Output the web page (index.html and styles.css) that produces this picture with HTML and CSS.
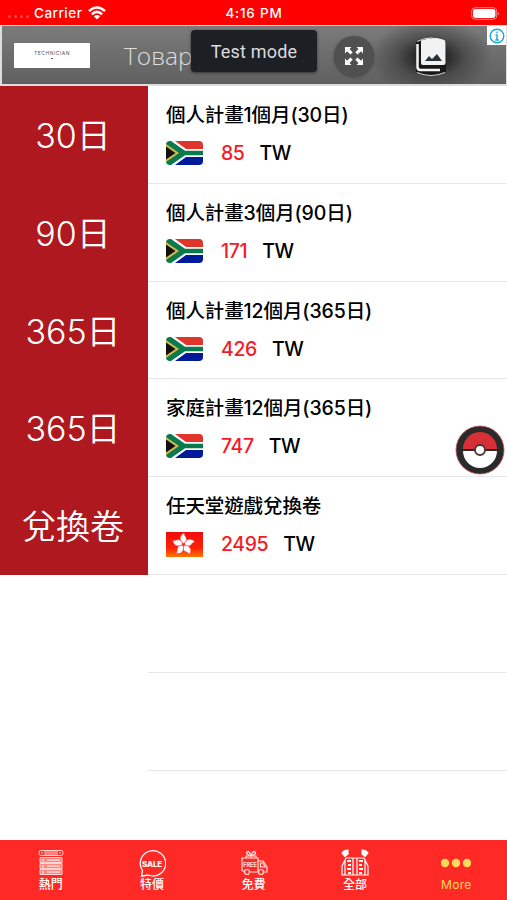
FILE: index.html
```html
<!DOCTYPE html>
<html lang="zh-TW">
<head>
    <meta charset="UTF-8">
    <meta name="viewport" content="width=device-width, initial-scale=1.0">
    <title>會員計畫</title>
    <link rel="stylesheet" href="styles.css">
</head>
<body>
    <svg class="defs" width="0" height="0">
        <symbol id="flag-za" viewBox="0 0 37 24">
            <path fill="#fff" d="M0 0h37v24H0z"/>
            <path fill="#df352c" d="M9 0h28v8H20z"/>
            <path fill="#001b9a" d="M9 24h28v-8H20z"/>
            <path fill="#087a4d" d="M0 0h5l14 9.7h18v4.6H19L5 24H0z"/>
            <path fill="#d8b84a" d="M0 3l13 9L0 21z"/>
            <path fill="#111" d="M0 5.500L9.500 12 0 18.500z"/>
        </symbol>
    </svg>

    <div class="app">
        <header class="status">
            <div class="carrier">
                <span class="signal"><i></i><i></i><i></i><i></i></span>
                <span>Carrier</span>
                <svg class="wifi" viewBox="0 0 18 14" fill="none" stroke="#fff" stroke-width="2.5">
                    <path d="M1 5.2Q9-2.1 17 5.2M3.8 8.3Q9 3.5 14.2 8.3"/>
                    <path fill="#fff" stroke="none" d="M5.8 10.2Q9 7.6 12.2 10.2L9 13.6z"/>
                </svg>
            </div>
            <div class="time">4:16 PM</div>
            <svg class="battery" viewBox="0 0 29 13">
                <rect x=".7" y=".7" width="25" height="11.6" rx="3.5" fill="none" stroke="#ff8f8f"/>
                <rect x="2" y="2" width="22.4" height="9" rx="2.4" fill="#fff"/>
                <path fill="#ff8f8f" d="M27 4.5q1.8 2 0 4z"/>
            </svg>
        </header>

        <div class="banner">
            <div class="technician">TECHNICIAN<b></b></div>
            <div class="banner-title">Товар</div>
            <div class="test-mode">Test mode</div>
            <div class="expand">
                <svg viewBox="0 0 18 18" fill="#fff">
                    <path d="M0 0h6.5L4.5 2l3.2 3.2-2.3 2.3L2 4.3 0 6.5z"/>
                    <path d="M18 0v6.5L16 4.3l-3.4 3.2-2.3-2.3L13.5 2l-2-2z"/>
                    <path d="M0 18v-6.5l2 2.2 3.4-3.2 2.3 2.3L4.5 16l2 2z"/>
                    <path d="M18 18h-6.5l2-2-3.2-3.2 2.3-2.3 3.4 3.2 2-2.2z"/>
                </svg>
            </div>
            <div class="gallery">
                <svg viewBox="0 0 32 40">
                    <path fill="#181818" d="M1 5Q16-3 31 5v30Q16 43 1 35z"/>
                    <path fill="none" stroke="#ddd" d="M2 4.500Q16-2.500 30 4.500M2 35.500q14 6 28 0"/>
                    <path fill="none" stroke="#f5f5f5" stroke-width="2.500" d="M2.500 7v23q0 3 3 3H25"/>
                    <path fill="#f2f2f2" d="M6 3.500Q18-.5 28 2.500q2.500.5 2.500 3V26q0 2-2 2H8q-2 0-2-2z"/>
                    <path fill="#26333d" d="M10 24l4-5 3 3 5-5 5 7z"/>
                </svg>
            </div>
            <div class="ad-info">
                <svg viewBox="0 0 16 16" fill="none" stroke="#1ba6d6" stroke-width="1.4">
                    <circle cx="8" cy="8" r="6.8"/>
                    <path d="M8 3.5v1.8M6.5 7H8v4.700M6.200 12h3.600"/>
                </svg>
            </div>
        </div>

        <main class="plans">
            <div class="plan">
                <div class="days">30日</div>
                <div class="info">
                    <div class="name">個人計畫1個月(30日)</div>
                    <div class="price"><svg class="flag round"><use href="#flag-za"/></svg><span class="amount">85</span><span>TW</span></div>
                </div>
            </div>
            <div class="plan">
                <div class="days">90日</div>
                <div class="info">
                    <div class="name">個人計畫3個月(90日)</div>
                    <div class="price"><svg class="flag round"><use href="#flag-za"/></svg><span class="amount">171</span><span>TW</span></div>
                </div>
            </div>
            <div class="plan">
                <div class="days">365日</div>
                <div class="info">
                    <div class="name">個人計畫12個月(365日)</div>
                    <div class="price"><svg class="flag round"><use href="#flag-za"/></svg><span class="amount">426</span><span>TW</span></div>
                </div>
            </div>
            <div class="plan">
                <div class="days">365日</div>
                <div class="info">
                    <div class="name">家庭計畫12個月(365日)</div>
                    <div class="price"><svg class="flag round"><use href="#flag-za"/></svg><span class="amount">747</span><span>TW</span></div>
                </div>
            </div>
            <div class="plan">
                <div class="days">兌換卷</div>
                <div class="info">
                    <div class="name">任天堂遊戲兌換卷</div>
                    <div class="price">
                        <svg class="flag" viewBox="0 0 37 25">
                            <defs>
                                <linearGradient id="hk" x2="0" y2="1">
                                    <stop offset="0" stop-color="#f00c0c"/>
                                    <stop offset=".65" stop-color="#fc2108"/>
                                    <stop offset="1" stop-color="#ff7900"/>
                                </linearGradient>
                                <path id="petal" d="M0-1C-5-4-4-10 1-11.500 0-9 4-7 3-4 2.500-2 1-2 0-1z"/>
                            </defs>
                            <path fill="url(#hk)" d="M0 0h37v25H0z"/>
                            <g fill="#fff" stroke="#f33" stroke-width=".5" transform="translate(17.500 12.500)">
                                <use href="#petal"/>
                                <use href="#petal" transform="rotate(72)"/>
                                <use href="#petal" transform="rotate(144)"/>
                                <use href="#petal" transform="rotate(216)"/>
                                <use href="#petal" transform="rotate(288)"/>
                            </g>
                        </svg>
                        <span class="amount">2495</span><span>TW</span>
                    </div>
                </div>
            </div>
            <div class="plan empty"><div class="info"></div></div>
            <div class="plan empty"><div class="info"></div></div>
        </main>

        <svg class="pokeball" viewBox="0 0 50 50">
            <circle cx="25" cy="25" r="24" fill="#292b2b" stroke="#c8505c" stroke-width=".8"/>
            <path fill="#d72f35" d="M8 24a17 17 0 0 1 34 0z"/>
            <path fill="#fff" d="M8 26a17 17 0 0 0 34 0z"/>
            <circle cx="25" cy="25" r="5" fill="#fff" stroke="#4a3b32" stroke-width="2"/>
        </svg>

        <nav class="tabs">
            <a class="tab">
                <svg viewBox="0 0 28 28" fill="none" stroke="#ffd5d1">
                    <rect x="2" y="1.5" width="24" height="5" rx="2"/>
                    <path d="M4 4h2M22 4h2M7 3h14M7 5h14"/>
                    <path fill="#ff8580" d="M3 8.500h22v5H3zM3 14.500h22v5H3zM3 20.500h22v5H3z"/>
                    <path stroke-width="1.5" d="M6 10v2.500M6 16v2.500M6 22v2.500M10 11h13M10 17h13M10 23h13"/>
                </svg>
                <span>熱門</span>
            </a>
            <a class="tab">
                <svg viewBox="0 0 28 28" fill="none" stroke="#fff" stroke-width="1.3">
                    <path d="M4.500 21.500A12.700 12.700 0 1 1 10 26L3.500 27.200z"/>
                    <text class="sale-text" x="14" y="17.500" text-anchor="middle">SALE</text>
                </svg>
                <span>特價</span>
            </a>
            <a class="tab">
                <svg viewBox="0 0 28 28" fill="none" stroke="#ffe2df" stroke-width="1.2">
                    <path d="M2 22V9h16v13M18 12h5l4 6v5h-3M2 22h3M9 23h9M6 9V7h10v2M11 7Q5 5 7 3t4 4Q13 1 15 3t-4 4"/>
                    <circle cx="7" cy="23" r="2.5"/>
                    <circle cx="21" cy="23" r="2.5"/>
                    <path d="M20.500 14H23l2 4h-4.500z"/>
                    <text class="free-text" x="10" y="17.500" text-anchor="middle">FREE</text>
                </svg>
                <span>免費</span>
            </a>
            <a class="tab">
                <svg viewBox="0 0 28 28" fill="none" stroke="#fff" stroke-width="1.2">
                    <path fill="#fff" d="M1 4q2-3 6-3v4L4 7.500zM27 4q-2-3-6-3v4l3 2.500z"/>
                    <path d="M5 9h7v17H1V17zM23 9h-7v17h11V17zM12 9h4M12 26h4M4 11v15M24 11v15"/>
                    <path stroke-width="2" d="M6 12h4M7 16h3M6 20h4M7 24h3M18 12h4M18 16h3M18 20h4M18 24h3"/>
                </svg>
                <span>全部</span>
            </a>
            <a class="tab more">
                <svg viewBox="0 0 30 28" fill="#ffd95a">
                    <circle cx="4" cy="14" r="4.2"/>
                    <circle cx="15" cy="14" r="4.2"/>
                    <circle cx="26" cy="14" r="4.2"/>
                </svg>
                <span>More</span>
            </a>
        </nav>
    </div>
</body>
</html>
```
FILE: styles.css
```css
* {
    box-sizing: border-box;
}
body {
    margin: 0;
    font-family: Inter, "Noto Sans CJK TC", sans-serif;
    background-color: #fff;
    color: #000;
}
svg {
    display: block;
    flex-shrink: 0;
}
.defs {
    position: absolute;
}
.app {
    position: relative;
    display: flex;
    flex-direction: column;
    width: 507px;
    height: 900px;
    overflow: hidden;
}
.status {
    display: grid;
    grid-template-columns: 1fr auto 1fr;
    align-items: center;
    height: 25px;
    padding: 1px 7px 0 8px;
    background-color: #f00;
    color: #fff;
    font-size: 13.5px;
    font-weight: 500;
    line-height: 24px;
}
.carrier {
    display: flex;
    align-items: center;
    letter-spacing: .5px;
}
.time {
    font-size: 13.5px;
    letter-spacing: .8px;
}
.signal {
    display: flex;
    gap: 3px;
    width: 26px;
    padding-top: 7px;
}
.signal i {
    width: 3px;
    height: 3px;
    border-radius: 50%;
    background-color: #ff4545;
}
.wifi {
    width: 18px;
    height: 14px;
    margin-left: 6px;
}
.battery {
    width: 29px;
    height: 13px;
    justify-self: end;
}
.banner {
    position: relative;
    display: flex;
    align-items: center;
    height: 61px;
    padding-left: 12px;
    border: 2px solid #ddd;
    border-top-width: 1px;
    border-right-width: 1px;
    background: radial-gradient(ellipse 62px 38px at 429px 31px, #222 20%, #3338 55%, transparent 100%), linear-gradient(#7b7b7b, #606060);
}
.technician {
    display: flex;
    flex-direction: column;
    align-items: center;
    width: 76px;
    height: 25px;
    padding-top: 7px;
    background-color: #fff;
    color: #555;
    font-size: 5px;
    line-height: 7px;
    letter-spacing: .5px;
}
.technician b {
    width: 2px;
    height: 1px;
    margin-top: 1px;
    background-color: #555;
}
.banner-title {
    width: 66px;
    margin-left: 34px;
    color: #ddd;
    font-family: "Open Sans", sans-serif;
    font-size: 24.5px;
    font-weight: 300;
}
.test-mode {
    position: absolute;
    left: 189px;
    top: 4px;
    width: 126px;
    height: 42px;
    border-radius: 4px;
    background-color: #1c1f24;
    box-shadow: 0 1px 3px #333;
    color: #ddd;
    font-family: Roboto, sans-serif;
    font-size: 18px;
    letter-spacing: .2px;
    line-height: 43px;
    text-align: center;
}
.expand {
    display: grid;
    place-items: center;
    width: 40px;
    height: 40px;
    margin-top: 2px;
    margin-left: 144px;
    border-radius: 50%;
    background-color: #505050;
    box-shadow: 0 1px 3px #444;
}
.expand svg {
    width: 18px;
    height: 18px;
}
.gallery {
    margin-top: 4px;
    margin-left: 41px;
}
.gallery svg {
    width: 32px;
    height: 40px;
}
.ad-info {
    position: absolute;
    top: 0;
    right: 0;
    display: grid;
    place-items: center;
    width: 19px;
    height: 19px;
    background-color: #fff;
}
.ad-info svg {
    width: 16px;
    height: 16px;
}
.plans {
    flex: 1;
}
.plan {
    display: flex;
    height: 97.8px;
}
.days {
    width: 148px;
    padding: 21px 2px 0 0;
    background-color: #b0181f;
    color: #fff;
    font-size: 34px;
    font-weight: 350;
    line-height: 58px;
    text-align: center;
}
.info {
    flex: 1;
    padding: 16px 18px 0;
    border-bottom: 1px solid #e7e7e7;
}
.name {
    height: 26px;
    font-size: 19.5px;
    font-weight: 500;
    line-height: 26px;
    letter-spacing: -.1px;
    white-space: nowrap;
}
.price {
    display: flex;
    align-items: center;
    height: 26px;
    margin-top: 12px;
    font-size: 19.5px;
    font-weight: 500;
    letter-spacing: -.4px;
}
.flag {
    width: 37px;
    height: 25px;
}
.round {
    height: 24px;
    border-radius: 4px;
}
.amount {
    margin: 0 15px 0 18px;
    color: #f51b25;
}
.empty .info {
    margin-left: 148px;
}
.pokeball {
    position: absolute;
    left: 455px;
    top: 425px;
    width: 50px;
    height: 50px;
}
.tabs {
    display: flex;
    height: 60px;
    background-color: #ff2a26;
}
.tab {
    flex: 1;
    display: flex;
    flex-direction: column;
    align-items: center;
    padding-top: 9px;
    color: #fff;
    font-size: 12px;
    font-weight: 500;
    line-height: 16px;
}
.tab svg {
    width: 28px;
    height: 28px;
}
.tab.more {
    color: #ffd95a;
    font-weight: 400;
    letter-spacing: .3px;
}
.tab.more svg {
    width: 30px;
}
.sale-text {
    fill: #fff;
    stroke: none;
    font-size: 8px;
    font-weight: 800;
    letter-spacing: -.2px;
}
.free-text {
    fill: #ffe2df;
    stroke: none;
    font-size: 5.5px;
    font-weight: 700;
}
```
